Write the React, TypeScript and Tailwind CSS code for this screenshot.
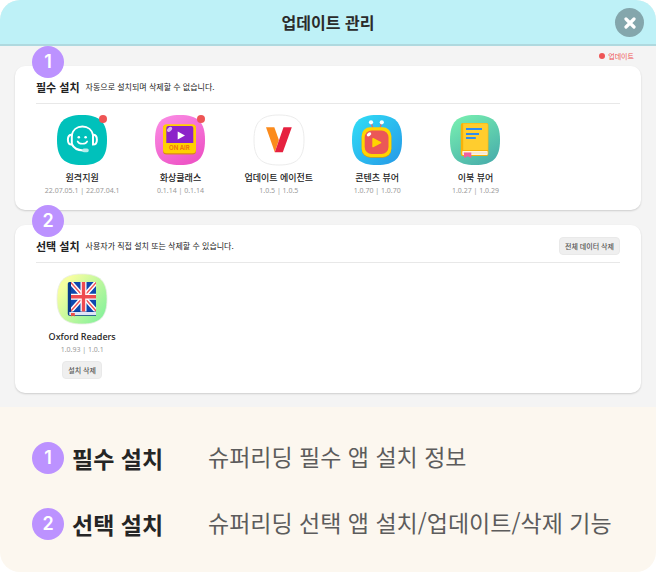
import type { ReactNode } from 'react';

const SQUIRCLE = 'M25 0C43 0 50 7 50 25S43 50 25 50S0 43 0 25S7 0 25 0Z';

function RemoteIcon() {
  return (
    <svg viewBox="0 0 50 50" className="size-full" aria-hidden="true">
      <path d={SQUIRCLE} fill="#00c1bb" />
      <g fill="none" stroke="#fff" strokeWidth="2" strokeLinecap="round">
        <path d="M14.6 20.5C15.6 14.8 20 11.6 25.4 11.6S35.2 14.8 36.2 20.5" />
        <path d="M14.8 29C16.5 32.8 20.5 35.2 26 35.4" />
        <path d="M14.8 19.8V29.6C12.2 29.6 10.9 27.4 10.9 24.7S12.2 19.8 14.8 19.8Z" />
        <path d="M36 19.8V29.6C38.6 29.6 39.9 27.4 39.9 24.7S38.6 19.8 36 19.8Z" />
        <path d="M20.6 26.4C22 29.6 28.8 29.6 30.2 26.4" strokeWidth="1.6" />
      </g>
      <circle cx="21.8" cy="22.3" r="1.3" fill="#fff" />
      <circle cx="28.6" cy="22.3" r="1.3" fill="#fff" />
      <rect x="25.3" y="33.4" width="6.4" height="3.8" rx="1.6" fill="#b5eeec" />
    </svg>
  );
}

function ClassIcon() {
  return (
    <svg viewBox="0 0 50 50" className="size-full" aria-hidden="true">
      <defs>
        <linearGradient id="class-bg" x1="0" y1="0" x2="0.6" y2="1">
          <stop offset="0" stopColor="#fb8fe6" />
          <stop offset="1" stopColor="#ee55c6" />
        </linearGradient>
      </defs>
      <path d={SQUIRCLE} fill="url(#class-bg)" />
      <rect x="8" y="10" width="33" height="29.5" rx="3.5" fill="#d9851f" />
      <rect x="8" y="9.2" width="33" height="29" rx="3.5" fill="#ffd000" />
      <path d="M13.3 11H36.3Q38.3 11 38.3 13V28H11.3V13Q11.3 11 13.3 11Z" fill="#8c22c9" />
      <ellipse cx="14.6" cy="14.4" rx="3" ry="1.9" fill="#d9b4f0" transform="rotate(-45 14.6 14.4)" />
      <path d="M22.7 16.6L30 20.5L22.7 24.4Z" fill="#fff" />
      <text x="24.4" y="35" textAnchor="middle" fontSize="6" fontWeight="600" fill="#ee6a10" fontFamily="Inter, sans-serif">
        ON AIR
      </text>
    </svg>
  );
}

function AgentIcon() {
  return (
    <svg viewBox="0 0 50 50" className="size-full overflow-visible" aria-hidden="true">
      <path d={SQUIRCLE} fill="#fff" stroke="#ececec" />
      <path d="M12 12.2H20.3L24.9 25L20.8 37.2Z" fill="#fb8b1d" />
      <path d="M29.5 12.2H37.8L28.8 37.2H20.8Z" fill="#e6213f" />
    </svg>
  );
}

function ContentsIcon() {
  return (
    <svg viewBox="0 0 50 50" className="size-full" aria-hidden="true">
      <defs>
        <linearGradient id="contents-bg" x1="0" y1="0" x2="1" y2="1">
          <stop offset="0.1" stopColor="#30d8f5" />
          <stop offset="0.9" stopColor="#279fe8" />
        </linearGradient>
      </defs>
      <path d={SQUIRCLE} fill="url(#contents-bg)" />
      <path d="M19.2 8L21 13.5M29.6 8L27.8 13.5" stroke="#e2656c" strokeWidth="1.2" />
      <circle cx="19" cy="7.3" r="2.1" fill="#fff" />
      <circle cx="29.8" cy="7.3" r="2.1" fill="#fff" />
      <rect x="9.7" y="13.2" width="29.6" height="29.6" rx="8.5" fill="#d99a12" />
      <rect x="9.7" y="12.3" width="29.6" height="29.6" rx="8.5" fill="#ffd500" />
      <rect x="12.7" y="15.4" width="23.8" height="23.6" rx="7" fill="#eb5757" />
      <ellipse cx="17" cy="19.4" rx="2.5" ry="1.6" fill="#fff" transform="rotate(-35 17 19.4)" />
      <path d="M21 23.6L28.6 27.6L21 31.6Z" fill="#ffd500" stroke="#ffd500" strokeWidth="1.4" strokeLinejoin="round" />
    </svg>
  );
}

function EbookIcon() {
  return (
    <svg viewBox="0 0 50 50" className="size-full" aria-hidden="true">
      <defs>
        <linearGradient id="ebook-bg" x1="0.2" y1="0" x2="0.8" y2="1">
          <stop offset="0" stopColor="#76edb0" />
          <stop offset="1" stopColor="#48aeab" />
        </linearGradient>
      </defs>
      <path d={SQUIRCLE} fill="url(#ebook-bg)" />
      <rect x="10.8" y="8" width="27.6" height="33" rx="2" fill="#f9b208" />
      <path d="M13.2 8.6H36.6Q37.8 8.6 37.8 10V35H13.2Z" fill="#ffcd2e" />
      <rect x="12.3" y="36" width="25.4" height="4" rx="0.8" fill="#fff3dc" />
      <path d="M12.8 38H37.6" stroke="#e5d5bd" strokeWidth="0.6" />
      <path d="M16 14H32M16 19H29M16 23H25.8" stroke="#2f8cf0" strokeWidth="2" />
      <path d="M14 37.4H21.3V43L17.7 41.2L14 43Z" fill="#f0609f" />
    </svg>
  );
}

function OxfordIcon() {
  return (
    <svg viewBox="0 0 50 50" className="size-full overflow-visible" aria-hidden="true">
      <defs>
        <linearGradient id="oxford-bg" x1="0" y1="0.1" x2="1" y2="0.9">
          <stop offset="0.15" stopColor="#f5fea0" />
          <stop offset="0.9" stopColor="#8cf29b" />
        </linearGradient>
        <clipPath id="oxford-cover">
          <rect x="14" y="8" width="25" height="29.4" />
        </clipPath>
      </defs>
      <path d={SQUIRCLE} fill="url(#oxford-bg)" stroke="#e9ece4" strokeWidth="0.8" />
      <path d="M12.5 8H39V41.7H12.5Q10.8 41.7 10.8 40V9.8Q10.8 8 12.5 8Z" fill="#073a8c" />
      <g clipPath="url(#oxford-cover)">
        <rect x="14" y="8" width="25" height="30" fill="#0d47ae" />
        <path d="M12 6.5L41 39M41 6.5L12 39" stroke="#fff" strokeWidth="4.4" />
        <path d="M12 6.5L41 39M41 6.5L12 39" stroke="#ee5558" strokeWidth="1.5" />
        <path d="M26.5 8V38M14 22.7H39" stroke="#fff" strokeWidth="6" />
        <path d="M26.5 8V38M14 22.7H39" stroke="#ee4b50" strokeWidth="3.4" />
      </g>
      <rect x="12.3" y="38" width="26.7" height="3" fill="#dfe4f7" />
      <path d="M14 39H17.8V42.4L15.9 41.6L14 42.4Z" fill="#f04e45" />
    </svg>
  );
}

type AppItem = {
  name: string;
  version: string;
  icon: ReactNode;
  update?: boolean;
  removable?: boolean;
};

const requiredApps: AppItem[] = [
  { name: '원격지원', version: '22.07.05.1 | 22.07.04.1', icon: <RemoteIcon />, update: true },
  { name: '화상클래스', version: '0.1.14 | 0.1.14', icon: <ClassIcon />, update: true },
  { name: '업데이트 에이전트', version: '1.0.5 | 1.0.5', icon: <AgentIcon /> },
  { name: '콘텐츠 뷰어', version: '1.0.70 | 1.0.70', icon: <ContentsIcon /> },
  { name: '이북 뷰어', version: '1.0.27 | 1.0.29', icon: <EbookIcon /> },
];

const optionalApps: AppItem[] = [
  { name: 'Oxford Readers', version: '1.0.93 | 1.0.1', icon: <OxfordIcon />, removable: true },
];

function NumberBadge({ n }: { n: number }) {
  return (
    <span className="flex size-8 shrink-0 items-center justify-center rounded-full bg-[#bc92ff] font-[Inter,sans-serif] text-lg leading-none font-semibold text-white">
      {n}
    </span>
  );
}

function AppTile({ app }: { app: AppItem }) {
  return (
    <li className="flex flex-col items-center font-['Noto_Sans','Noto_Sans_CJK_KR',sans-serif]">
      <div className="relative size-[50px]">
        {app.icon}
        {app.update && <span className="absolute top-0 right-0 size-2 rounded-full bg-[#ee5555]" />}
      </div>
      <h3 className="mt-[7px] text-[9px] leading-3 font-medium whitespace-nowrap text-[#222]">{app.name}</h3>
      <p className="mt-[2px] text-[7px] leading-[10px] whitespace-nowrap text-[#999]">{app.version}</p>
      {app.removable && (
        <button
          type="button"
          className="mt-[6px] h-[18px] rounded-[4px] border border-[#e9e9e9] bg-[#efefef] px-[5px] text-[7px] leading-none font-medium text-[#555]"
        >
          설치 삭제
        </button>
      )}
    </li>
  );
}

function InstallSection({
  n,
  title,
  note,
  apps,
  action,
}: {
  n: number;
  title: string;
  note: string;
  apps: AppItem[];
  action?: ReactNode;
}) {
  return (
    <section className="relative rounded-[10px] bg-white pb-[14px] shadow-[0_1px_2px_rgba(0,0,0,0.16)]">
      <div className="absolute -top-5 left-[17px]">
        <NumberBadge n={n} />
      </div>
      <div className="mx-[21px] flex items-center border-b border-[#e8e8e8] pt-[10px] pb-[5px]">
        <h2 className="text-[11px] leading-[22px] font-bold text-[#222]">{title}</h2>
        <p className="ml-[6px] text-[8px] leading-[22px] text-[#222]">{note}</p>
        {action}
      </div>
      <ul className="grid grid-cols-6 px-[18px] pt-[11px]">
        {apps.map((app) => (
          <AppTile key={app.name} app={app} />
        ))}
      </ul>
    </section>
  );
}

function LegendRow({ n, title, text }: { n: number; title: string; text: string }) {
  return (
    <div className="grid grid-cols-[176px_1fr] items-center">
      <dt className="flex items-center gap-2 text-[23px] leading-8 font-bold whitespace-nowrap text-[#252525]">
        <NumberBadge n={n} />
        {title}
      </dt>
      <dd className="pb-1 text-[23px] leading-7 whitespace-nowrap text-[#5c5c5c]">{text}</dd>
    </div>
  );
}

export default function App() {
  return (
    <div
      lang="ko"
      className="overflow-hidden rounded-[20px] bg-[#fcf7ef] font-['Noto_Sans_CJK_KR','Noto_Sans',sans-serif]"
    >
      <header className="relative flex h-[46px] items-center justify-center border-b-2 border-[#afd9df] bg-[#bef1f7]">
        <h1 className="text-base leading-6 font-bold text-[#2b2b2b]">업데이트 관리</h1>
        <button
          type="button"
          aria-label="닫기"
          className="absolute top-2 right-3 flex size-[29px] items-center justify-center rounded-full bg-[#84a6ac]"
        >
          <svg viewBox="0 0 12 12" className="size-3" aria-hidden="true">
            <path d="M2 2L10 10M10 2L2 10" stroke="#fff" strokeWidth="3.2" strokeLinecap="round" />
          </svg>
        </button>
      </header>

      <main className="bg-[#f4f4f4] px-[15px] pb-[14px]">
        <div className="flex h-5 items-center justify-end gap-[3px] pr-[7px] text-[7px] leading-none text-[#ee5555]">
          <span className="size-[6px] rounded-full bg-[#ee5555]" />
          업데이트
        </div>
        <div className="flex flex-col gap-[15px]">
          <InstallSection n={1} title="필수 설치" note="자동으로 설치되며 삭제할 수 없습니다." apps={requiredApps} />
          <InstallSection
            n={2}
            title="선택 설치"
            note="사용자가 직접 설치 또는 삭제할 수 있습니다."
            apps={optionalApps}
            action={
              <button
                type="button"
                className="ml-auto h-[18px] rounded-[4px] border border-[#e9e9e9] bg-[#efefef] px-[5px] text-[7px] leading-none font-medium text-[#555]"
              >
                전체 데이터 삭제
              </button>
            }
          />
        </div>
      </main>

      <dl className="flex flex-col gap-[34px] px-8 pt-[35px] pb-8">
        <LegendRow n={1} title="필수 설치" text="슈퍼리딩 필수 앱 설치 정보" />
        <LegendRow n={2} title="선택 설치" text="슈퍼리딩 선택 앱 설치/업데이트/삭제 기능" />
      </dl>
    </div>
  );
}
